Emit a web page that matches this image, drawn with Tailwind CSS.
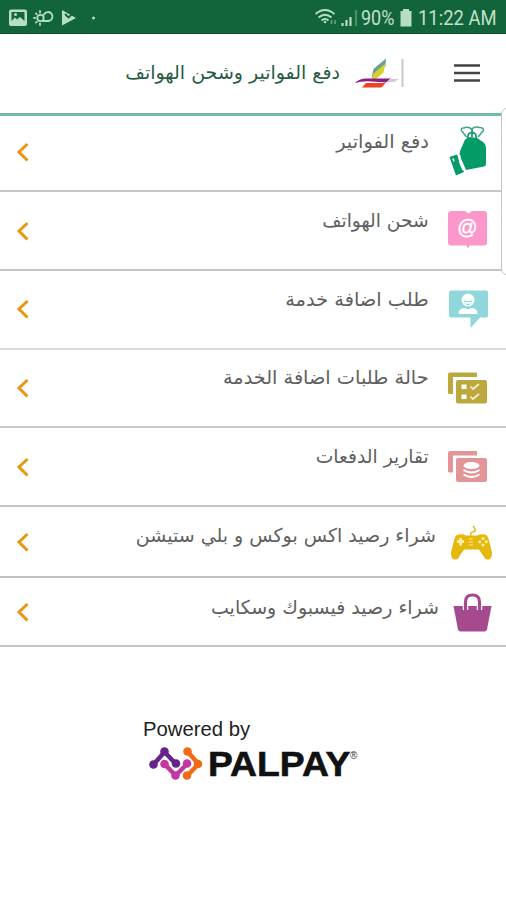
<!DOCTYPE html>
<html lang="ar">
<head>
  <meta charset="UTF-8" />
  <meta name="viewport" content="width=device-width, initial-scale=1.0"/>
  <title>PalPay</title>
  <script src="https://cdn.jsdelivr.net/npm/@tailwindcss/browser@4"></script>
</head>
<body class="bg-white w-[506px] h-[900px] overflow-hidden relative font-['DejaVu_Sans',sans-serif]">

  <!-- Status bar -->
  <div class="h-[34px] bg-[#12643a] border-b border-[#0a4a20] flex items-center justify-between pl-2 pr-[10px] text-[#c3e0cb]">
    <svg class="w-[92px] h-[34px]" viewBox="8 0 92 34" fill="none">
      <rect x="9" y="9.500" width="18" height="16.500" rx="2" fill="#b5dfc0"/>
      <path d="M11.500 12h13v9l-4.500-4-3 2.500-2-2-3.500 3.500z" fill="#12643a"/>
      <circle cx="15.500" cy="14.500" r="1.500" fill="#b5dfc0"/>
      <circle cx="40.500" cy="18" r="3.200" stroke="#b5dfc0" stroke-width="1.800"/>
      <path d="M40 11v1.500M40 23.500V25M34 18h1M36 13.500l.700.700M36 22.500l.700-.700M43 21h5.500a4.500 4.500 0 1 0-4.500-6.500" stroke="#b5dfc0" stroke-width="1.800" stroke-linecap="round"/>
      <path d="M62 10l14 8-14 7.500z" fill="#b5dfc0"/>
      <path d="M65 14l3.500 3.500 7-6.500" stroke="#12643a" stroke-width="1.800"/>
      <circle cx="93.500" cy="18" r="1.500" fill="#b5dfc0"/>
    </svg>
    <div class="flex items-center font-[Roboto,sans-serif] text-[20px] leading-none">
      <svg class="w-[48px] h-[34px]" viewBox="310 0 48 34" fill="none" stroke="#b5dfc0" stroke-width="1.800">
        <path d="M312.500 14q9.500-8 19 0M315.500 17.500q6.500-5.500 13 0M318.500 20.500q3.500-3 7 0"/>
        <circle cx="322" cy="22" r="1.300" fill="#b5dfc0" stroke="none"/>
        <path d="M328.500 24v-4M332 20v4" stroke="#5f9c79"/>
        <path d="M339.500 26v-3M343.500 26v-6M347.500 26v-9" stroke-width="2.200"/>
        <path d="M353 26V10" stroke="#4b8d68" stroke-width="2.200"/>
      </svg>
      <span class="w-[38px] whitespace-nowrap"><span class="inline-block origin-left scale-x-[0.9] mt-[3px]">90%</span></span>
      <svg class="w-[14px] h-[34px]" viewBox="399 0 14 34">
        <path d="M403 9h6v2h2.500v15.500h-11V11h2.500z" fill="#b5dfc0"/>
      </svg>
      <span class="w-[83px] whitespace-nowrap"><span class="inline-block origin-left scale-x-[0.92] mt-[3px] ml-[5px]">11:22 AM</span></span>
    </div>
  </div>

  <!-- Header -->
  <div dir="rtl" class="h-[82px] border-b-[3px] border-[#72bca7] flex items-center pr-[25px]">
    <svg class="w-[28px] h-[20px] -mt-[2px]" viewBox="0 0 28 20" stroke="#444" stroke-width="2.600">
      <path d="M1 2.500h26M1 10h26M1 17.500h26"/>
    </svg>
    <svg class="w-[50px] h-[32px] mr-[48px] -mt-[2px]" viewBox="355 57 50 32">
      <path d="M386 58.500L373.500 69l-2 9 14-12z" fill="#6f9d92"/>
      <path d="M385.500 63.500L373 74l-1 8.500 11.500-10z" fill="#d6d02c"/>
      <path d="M355 83q5-5 12-4.500h24l-5 4-14-1q-9-1-17 1.500z" fill="#8c1c87"/>
      <path d="M366 83h19.500l-4 4.500H362z" fill="#f04320"/>
      <path d="M389.500 79h9.500l-5 3h-6.500z" fill="#d8c6dc"/>
      <path d="M402.500 59v28" stroke="#c8c8c8" stroke-width="2"/>
    </svg>
    <h1 class="mr-[15px] whitespace-nowrap text-[19px] text-[#275c45] -mt-[2px]">دفع الفواتير وشحن الهواتف</h1>
  </div>

  <!-- Services list -->
  <ul dir="rtl" class="text-[19px] leading-6 text-[#606060]">
    <li class="h-[76px] border-b-2 border-[#c6c6c6] flex items-start pr-[18px] pl-[16px]">
      <svg class="w-[40px] h-[52px] mt-[9px]" viewBox="448 125 40 52">
        <path d="M466.500 137l-5-6.500q-1-2.500 2-2.500 5-2 8 1 4-3 8-1.500 4 0 4 3l-5.500 6.500" fill="#fff" stroke="#3aa982" stroke-width="1.500" stroke-linejoin="round"/>
        <path d="M472 129v8M467.500 139l1-5q4-3 7 0l1 5" fill="none" stroke="#169a6b" stroke-width="1.700"/>
        <path d="M465 139.500l5-2.500 7 1 6 4q3 2 3 7v15q0 2-2 2.500l-18 3.500-6.500-15q0-3 1-5z" fill="#049b67"/>
        <path d="M449.500 157l7.500-2.500 7 17.500-8 3.500z" fill="#049b67"/>
        <path d="M459.500 155q-.500 7 4 15" fill="none" stroke="#fff" stroke-width="2"/>
        <path d="M453 158.500l1 3" stroke="#fff" stroke-width="1.500"/>
      </svg>
      <span class="flex-1 mr-[19px] mt-[13px]"><span class="inline-block origin-right scale-x-[1.02]">دفع الفواتير</span></span>
      <svg class="w-[13px] h-[20px] mt-[26px]" viewBox="0 0 13 20" fill="none" stroke="#e8960f" stroke-width="3"><path d="M11.500 2L3 10l8.500 8.500"/></svg>
    </li>
    <li class="h-[79px] border-b-2 border-[#c6c6c6] flex items-start pr-[18px] pl-[16px]">
      <svg class="w-[40px] h-[38px] mt-[19px]" viewBox="0 0 40 38">
        <rect x="0" y="0" width="39" height="34.500" rx="3" fill="#fc97cb"/>
        <path d="M17.500 33h5l-2.500 4.500z" fill="#fc97cb"/>
        <path d="M17 0h7l-3.500 2.500z" fill="#fff"/>
        <text x="19.500" y="23" text-anchor="middle" fill="#fff" stroke="#fff" stroke-width="0.400" font-family="Liberation Sans" font-size="20">@</text>
      </svg>
      <span class="flex-1 mr-[19px] mt-[16px]"><span class="inline-block origin-right scale-x-[0.98]">شحن الهواتف</span></span>
      <svg class="w-[13px] h-[20px] mt-[29px]" viewBox="0 0 13 20" fill="none" stroke="#e8960f" stroke-width="3"><path d="M11.500 2L3 10l8.500 8.500"/></svg>
    </li>
    <li class="h-[79px] border-b-2 border-[#d8d8d8] flex items-start pr-[18px] pl-[16px]">
      <svg class="w-[40px] h-[39px] mt-[19px]" viewBox="0 0 40 39">
        <path d="M3 0.500h35q2 0 2 2v23q0 2-2 2h-6L22.500 38V27.500H3q-2 0-2-2v-23q0-2 2-2z" fill="#8fd7db"/>
        <circle cx="20" cy="10" r="6.500" fill="#fff"/>
        <path d="M15.500 10q5 2 9 0-1 5-4.500 5t-4.500-5z" fill="#8fd7db"/>
        <path d="M16 11.500q4 1.500 8 0-1 2.500-4 2.500t-4-2.500z" fill="#fff"/>
        <path d="M10.500 24q0-6 6-6l3.500 1.500 3.500-1.500q6 0 6 6z" fill="#fff"/>
      </svg>
      <span class="flex-1 mr-[19px] mt-[16px]"><span class="inline-block origin-right scale-x-[1.02]">طلب اضافة خدمة</span></span>
      <svg class="w-[13px] h-[20px] mt-[28px]" viewBox="0 0 13 20" fill="none" stroke="#e8960f" stroke-width="3"><path d="M11.500 2L3 10l8.500 8.500"/></svg>
    </li>
    <li class="h-[78px] border-b-2 border-[#c9c9c9] flex items-start pr-[18px] pl-[16px]">
      <svg class="w-[40px] h-[32px] mt-[22px]" viewBox="0 0 40 32">
        <path d="M2 0.500h26q1 0 1 1V5H5v17H1.500q-1.500 0-1.500-1.500V2.500q0-2 2-2z" fill="#bba940"/>
        <rect x="8" y="8" width="31" height="23.500" rx="2" fill="#bba940"/>
        <path d="M13.500 12.500h5v4.500h-5zM13.500 22.500h5V27h-5z" fill="#fff"/>
        <path d="M22.500 14.500l2.500 2.500 6-5M22.500 24.500l2.500 2.500 6-5" fill="none" stroke="#f6f0c8" stroke-width="1.700"/>
      </svg>
      <span class="flex-1 mr-[19px] mt-[15px]"><span class="inline-block origin-right scale-x-[1.015]">حالة طلبات اضافة الخدمة</span></span>
      <svg class="w-[13px] h-[20px] mt-[28px]" viewBox="0 0 13 20" fill="none" stroke="#e8960f" stroke-width="3"><path d="M11.500 2L3 10l8.500 8.500"/></svg>
    </li>
    <li class="h-[79px] border-b-2 border-[#c6c6c6] flex items-start pr-[18px] pl-[16px]">
      <svg class="w-[40px] h-[32px] mt-[22px]" viewBox="0 0 40 32">
        <path d="M2 1h26q1 0 1 1v3.500H5v17H1.500Q0 22.500 0 21V3q0-2 2-2z" fill="#e29497"/>
        <rect x="8" y="8" width="31" height="24" rx="2" fill="#e29497"/>
        <ellipse cx="23.500" cy="15.500" rx="8" ry="3.500" fill="#fff"/>
        <path d="M15.500 20q8 5 16 0M15.500 24.500q8 5 16 0" fill="none" stroke="#fff" stroke-width="2"/>
      </svg>
      <span class="flex-1 mr-[19px] mt-[16px]"><span class="inline-block origin-right scale-x-[0.985]">تقارير الدفعات</span></span>
      <svg class="w-[13px] h-[20px] mt-[29px]" viewBox="0 0 13 20" fill="none" stroke="#e8960f" stroke-width="3"><path d="M11.500 2L3 10l8.500 8.500"/></svg>
    </li>
    <li class="h-[71px] border-b-2 border-[#c2c2c2] flex items-start pr-[14px] pl-[16px]">
      <svg class="w-[41px] h-[35px] mt-[18px]" viewBox="0 0 41 35">
        <path d="M20 11q-1-4 2-4 3-1 2-3t-2-3" fill="none" stroke="#e2b912" stroke-width="1.500"/>
        <path d="M7 9.500q5-1 8 1h11q4-2 8-1 3 1 4 6l3 12q0 8-5 7-2 0-4-4l-4-6H13l-4 6q-2 4-4 4-5 1-5-7l3-12q1-5 4-6z" fill="#e6b80d"/>
        <path d="M9.500 13v7.500M6 16.700h7" stroke="#fff0a6" stroke-width="2.800"/>
        <path d="M18 14h4M18 17h4M18 20h4" stroke="#f6d966" stroke-width="1.300"/>
        <g fill="#fff0a6"><circle cx="32" cy="13.500" r="1.500"/><circle cx="32" cy="20" r="1.500"/><circle cx="28.700" cy="16.700" r="1.500"/><circle cx="35.300" cy="16.700" r="1.500"/></g>
      </svg>
      <span class="flex-1 mr-[15px] mt-[16px]">شراء رصيد اكس بوكس و بلي ستيشن</span>
      <svg class="w-[13px] h-[20px] mt-[25px]" viewBox="0 0 13 20" fill="none" stroke="#e8960f" stroke-width="3"><path d="M11.500 2L3 10l8.500 8.500"/></svg>
    </li>
    <li class="h-[69px] border-b-2 border-[#c6c6c6] flex items-start pr-[14px] pl-[16px]">
      <svg class="w-[39px] h-[39px] mt-[15px]" viewBox="0 0 39 39">
        <path d="M0.500 13h38L34 36.500q-0.500 2-2.500 2h-24q-2 0-2.500-2z" fill="#a54a8e"/>
        <path d="M12.500 17V9q0-7 7-7t7 7v8" fill="none" stroke="#fff" stroke-width="5.500"/>
        <path d="M12.500 16V9q0-7 7-7t7 7v7" fill="none" stroke="#a54a8e" stroke-width="3.200" stroke-linecap="round"/>
      </svg>
      <span class="flex-1 mr-[14px] mt-[17px]">شراء رصيد فيسبوك وسكايب</span>
      <svg class="w-[13px] h-[20px] mt-[24px]" viewBox="0 0 13 20" fill="none" stroke="#e8960f" stroke-width="3"><path d="M11.500 2L3 10l8.500 8.500"/></svg>
    </li>
  </ul>

  <!-- Edge panel handle -->
  <div class="absolute left-[501px] top-[108px] w-[12px] h-[167px] rounded-[6px] border-[1.500px] border-[#c4c4c4] bg-white"></div>

  <!-- Footer -->
  <div class="pt-[70px] pl-[143px] font-['Liberation_Sans',sans-serif]">
    <p class="text-[20px] leading-6 text-[#222]"><span class="inline-block origin-left scale-x-[1.015]">Powered by</span></p>
    <div class="flex items-center mt-[2px] pl-[5px]">
      <svg class="w-[56px] h-[36px]" viewBox="148 747 56 36" fill="none" stroke-width="4.500">
        <path d="M153.500 766.500l11-12.500 11.500 12" stroke="#682388"/>
        <g fill="#682388"><circle cx="153.500" cy="766.500" r="4.300"/><circle cx="164.500" cy="753.500" r="4.300"/><circle cx="176" cy="765.500" r="4.300"/></g>
        <path d="M187.500 753.500l11 12.500-11 11.500" stroke="#f36a16"/>
        <g fill="#f36a16"><circle cx="187.500" cy="753.500" r="4.300"/><circle cx="198" cy="766" r="4.300"/><circle cx="187" cy="777.500" r="4.300"/></g>
        <path d="M164.500 766l11 11.500 11.500-11.500" stroke="#c238a0"/>
        <g fill="#c238a0"><circle cx="164.500" cy="766" r="4.300"/><circle cx="175.500" cy="777.500" r="4.300"/><circle cx="187" cy="765.500" r="4.300"/></g>
      </svg>
      <span class="ml-[4px] w-[142px] whitespace-nowrap"><span class="inline-block origin-left scale-x-[1.065] text-[35px] leading-9 font-bold text-[#111] mt-[3px] [-webkit-text-stroke:0.600px_#111]">PALPAY</span></span>
      <span class="text-[10px] leading-none mb-[14px] text-[#333]">®</span>
    </div>
  </div>

</body>
</html>
